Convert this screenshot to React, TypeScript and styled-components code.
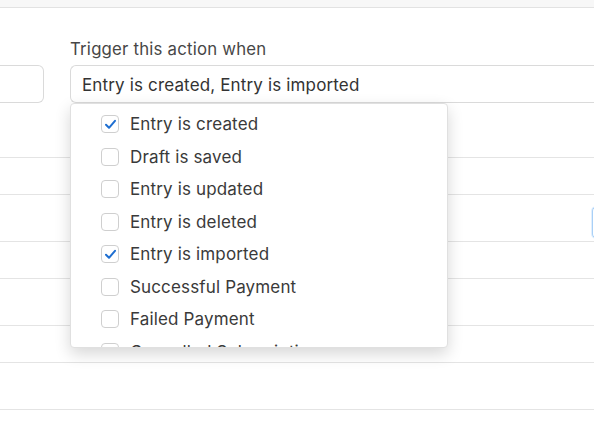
import React from 'react';
import styled, { createGlobalStyle } from 'styled-components';

const GlobalStyle = createGlobalStyle`
  html, body {
    margin: 0;
    padding: 0;
    background: #ffffff;
    font-family: Inter, "Liberation Sans", Arial, sans-serif;
    color: #333;
  }
  * { box-sizing: border-box; }
`;

const Page = styled.div`
  position: relative;
  width: 594px;
  height: 444px;
  overflow: hidden;
  background: #fff;
`;

const TopBand = styled.div`
  height: 8px;
  background: #f7f7f7;
  border-bottom: 1px solid #e2e2e2;
`;

const FormRow = styled.div`
  display: grid;
  grid-template-columns: 44px 1fr;
  column-gap: 26px;
  padding-top: 30px;
  height: 149px;
`;

const Field = styled.div`
  display: flex;
  flex-direction: column;
  justify-content: flex-start;
  position: relative;
`;

const Label = styled.div`
  font-size: 16.8px;
  letter-spacing: 0.2px;
  color: #474747;
  height: 27px;
  line-height: 22px;
  white-space: nowrap;
`;

const Input = styled.div<{ $side: 'left' | 'right' }>`
  height: 38px;
  border: 1px solid #dadada;
  border-left: ${(p) => (p.$side === 'left' ? 'none' : '1px solid #dadada')};
  border-right: ${(p) => (p.$side === 'right' ? 'none' : '1px solid #dadada')};
  border-radius: ${(p) => (p.$side === 'left' ? '0 6px 6px 0' : '6px 0 0 6px')};
  padding: 1px 11px 0;
  display: flex;
  align-items: center;
  font-size: 17px;
  letter-spacing: 0.15px;
  color: #333;
  background: #fff;
  white-space: nowrap;
`;

const Rows = styled.div`
  display: flex;
  flex-direction: column;
`;

const Row = styled.div<{ $h: number }>`
  height: ${(p) => p.$h}px;
  border-top: 1.5px solid #e4e4e4;
  display: flex;
  justify-content: flex-end;
  align-items: center;
`;

const FocusStub = styled.div`
  width: 4px;
  height: 31px;
  margin-top: 8px;
  margin-right: -2px;
  border: 1px solid #a9d0f7;
  border-right: none;
  border-radius: 5px 0 0 5px;
  box-shadow: 0 0 0 1px #e1effd;
`;

const Menu = styled.div`
  position: absolute;
  left: 70px;
  top: 103px;
  width: 378px;
  height: 245px;
  overflow: hidden;
  background: #fff;
  border: 1px solid #e0e0e0;
  border-radius: 4px;
  box-shadow: 0 6px 16px rgba(0, 0, 0, 0.16);
  padding-top: 4px;
`;

const Option = styled.div`
  height: 32.5px;
  display: flex;
  align-items: center;
  padding-left: 30px;
  gap: 11px;
  font-size: 17px;
  letter-spacing: 0.15px;
  color: #3a3a3a;
  white-space: nowrap;
`;

const Box = styled.span`
  width: 18px;
  height: 18px;
  border: 1px solid #cfcfcf;
  border-radius: 4px;
  background: #fff;
  display: inline-flex;
  align-items: center;
  justify-content: center;
  flex-shrink: 0;
`;

const options: { label: string; checked: boolean }[] = [
  { label: 'Entry is created', checked: true },
  { label: 'Draft is saved', checked: false },
  { label: 'Entry is updated', checked: false },
  { label: 'Entry is deleted', checked: false },
  { label: 'Entry is imported', checked: true },
  { label: 'Successful Payment', checked: false },
  { label: 'Failed Payment', checked: false },
  { label: 'Cancelled Subscription', checked: false },
];

const Check = () => (
  <svg width="13" height="13" viewBox="0 0 13 13">
    <path d="M2 6.8 L5 9.8 L11 2.8" fill="none" stroke="#1f6fd1" strokeWidth="2" strokeLinecap="round" strokeLinejoin="round" />
  </svg>
);

export default function App() {
  return (
    <Page>
      <GlobalStyle />
      <TopBand />
      <FormRow>
        <Field>
          <Label />
          <Input $side="left" />
        </Field>
        <Field>
          <Label>Trigger this action when</Label>
          <Input $side="right">Entry is created, Entry is imported</Input>
        </Field>
      </FormRow>
      <Rows>
        <Row $h={37} />
        <Row $h={47}>
          <FocusStub />
        </Row>
        <Row $h={37} />
        <Row $h={47} />
        <Row $h={37} />
        <Row $h={47} />
        <Row $h={40} />
      </Rows>
      <Menu>
        {options.map((o) => (
          <Option key={o.label}>
            <Box>{o.checked && <Check />}</Box>
            {o.label}
          </Option>
        ))}
      </Menu>
    </Page>
  );
}
